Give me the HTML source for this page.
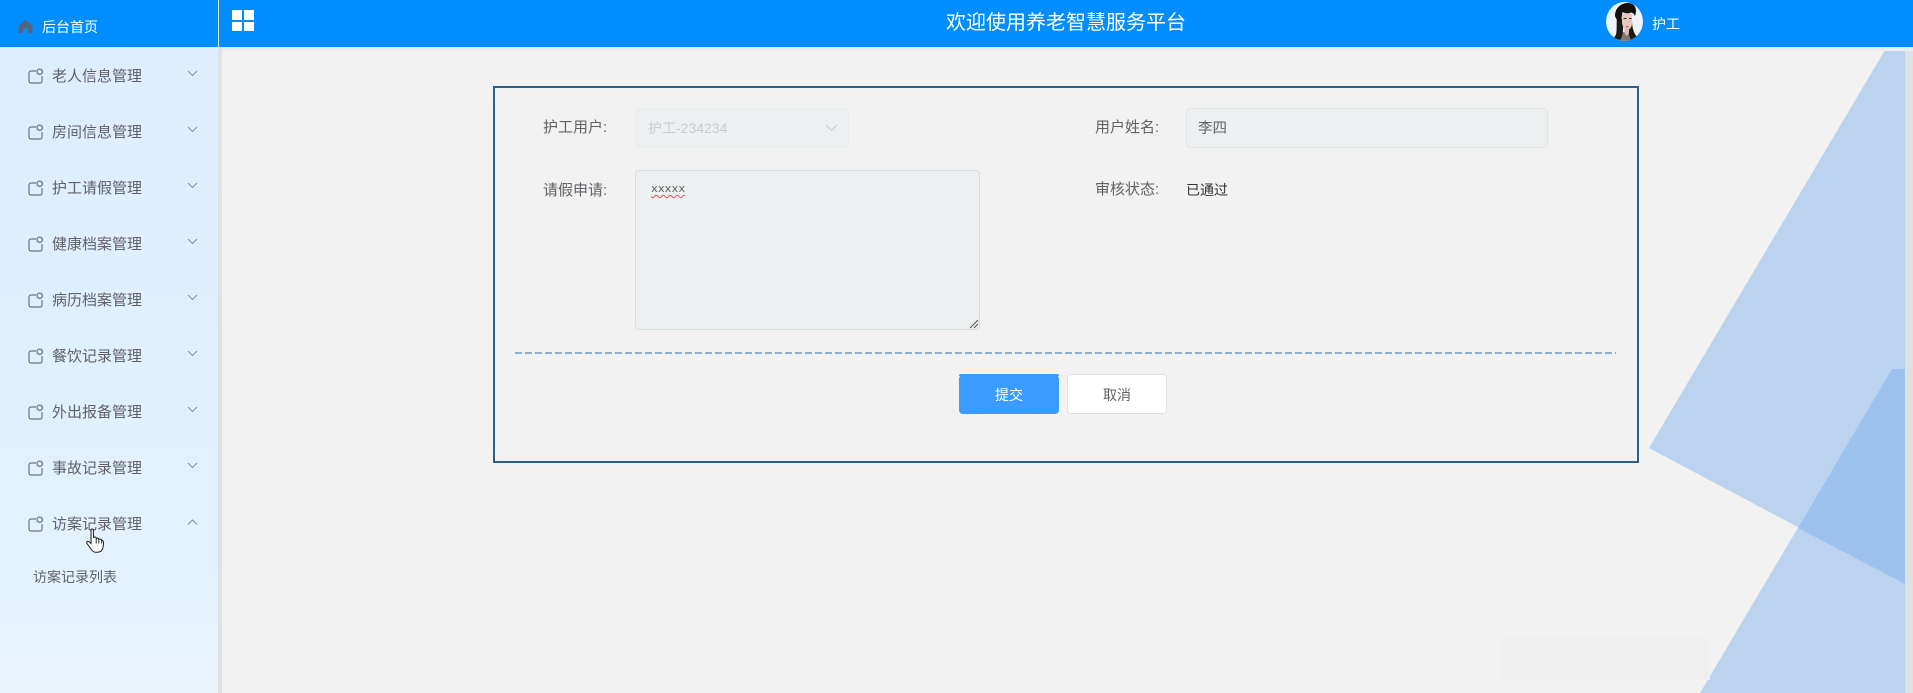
<!DOCTYPE html>
<html lang="zh">
<head>
<meta charset="utf-8">
<title>欢迎使用养老智慧服务平台</title>
<style>
html,body{margin:0;padding:0;width:1913px;height:693px;overflow:hidden;background:#f2f2f2;}
body{position:relative;font-family:"Liberation Sans","Noto Sans CJK SC",sans-serif;font-size:14px;color:#606266;}
.a{position:absolute;white-space:nowrap;}
#side{position:absolute;left:0;top:47px;width:218px;height:646px;background:linear-gradient(180deg,#deeeff 0%,#e1f0ff 60%,#e5f3ff 85%,#ebf4fd 100%);}
#sideShadow{position:absolute;left:218px;top:47px;width:4px;height:646px;background:#dfe1e4;}
#head{position:absolute;left:0;top:0;width:1913px;height:47px;background:#008dff;}
#headShadow{position:absolute;left:222px;top:47px;width:1691px;height:4px;background:linear-gradient(180deg,#e4e6ea,#f2f2f2);}
.m{font-size:15px;line-height:20px;left:52px;color:#606266;}
.ic{position:absolute;left:28px;}
.ch{position:absolute;left:187px;}
#box{position:absolute;left:493px;top:86px;width:1142px;height:373px;border:2px solid #2b5f85;background:#f2f2f2;}
.lb{font-size:15px;line-height:20px;color:#606266;}
.ctl{position:absolute;box-sizing:border-box;background:#edf0f0;border:1px solid #e1e5ea;border-radius:4px;}
.btn{position:absolute;box-sizing:border-box;height:40px;width:100px;top:374px;border-radius:4px;text-align:center;line-height:40px;font-size:14px;}
</style>
</head>
<body>
<svg class="a" style="left:222px;top:47px" width="1691" height="646" viewBox="222 47 1691 646">
  <rect x="1905" y="47" width="8" height="646" fill="#dfe0e4"/>
  <polygon points="1885,50 1905,50 1905,584 1649,448" fill="#bbd3ef"/>
  <polygon points="1892,369 1905,369 1905,693 1700,693" fill="#bbd3ef"/>
  <polygon points="1892,369 1905,369 1905,584 1798,528" fill="#9ec2ee"/>
  <rect x="1500" y="638" width="210" height="42" fill="#f0f0f0"/>
</svg>

<div id="side"></div>
<div id="sideShadow"></div>
<div id="headShadow"></div>
<div id="head"></div>
<div class="a" style="left:218px;top:0;width:1px;height:47px;background:#dcecff"></div>

<svg class="a" style="left:18px;top:19px" width="15" height="14" viewBox="0 0 15 14"><path d="M7.5 0.5 L14.5 7 V14 H10 V9 H5 V14 H0.5 V7 Z" fill="#53657b"/></svg>
<div class="a" style="left:42px;top:17px;line-height:20px;font-size:14px;color:#fff">后台首页</div>

<div class="a" style="left:232px;top:10px;width:10px;height:9.5px;background:#fff"></div>
<div class="a" style="left:244px;top:10px;width:10px;height:9.5px;background:#fff"></div>
<div class="a" style="left:232px;top:21.5px;width:10px;height:9.5px;background:#fff"></div>
<div class="a" style="left:244px;top:21.5px;width:10px;height:9.5px;background:#fff"></div>

<div class="a" style="left:946px;top:9px;width:240px;text-align:center;font-size:20px;line-height:28px;color:#fff">欢迎使用养老智慧服务平台</div>

<svg class="a" style="left:1606px;top:2px" width="38" height="39" viewBox="0 0 38 39">
  <defs><clipPath id="av"><ellipse cx="18.5" cy="19.5" rx="18.5" ry="19.5"/></clipPath></defs>
  <g clip-path="url(#av)">
    <rect width="38" height="39" fill="#eef2f9"/>
    <path d="M7 39 C8 32 14 30 19 30 C25 30 31 32 33 39 Z" fill="#7f7872"/>
    <path d="M11 13 C10 25 12 32 8 36 L14 38 C18 33 17 24 17 18 Z" fill="#1e1a18"/>
    <path d="M26 18 C26 24 27 30 31 35 L25 38 C22 33 23 26 23 22 Z" fill="#1e1a18"/>
    <path d="M16 12 H26 V21 C26 26 23 28 21 28 C18 27 16 24 16 20 Z" fill="#e8c8ba"/>
    <path d="M18.5 25 H23 V31 L20.5 34 L18.5 31 Z" fill="#dcbcae"/>
    <path d="M9 14 C9 5 16 1 22 1 C28 1 32 6 29 14 C27.5 11 26 10 24 11 C21 12 18 11 16.5 10 C16 13 15.5 16 15 20 C12 19 10 17 9 14 Z" fill="#14100d"/>
    <path d="M19.5 24 h3.5 l-1.5 1.2 Z" fill="#b8433f"/>
    <path d="M17.5 16.5 h3 M23 16.5 h2.5" stroke="#2a2a2a" stroke-width="1"/>
  </g>
</svg>
<div class="a" style="left:1652px;top:14px;line-height:20px;font-size:14px;color:#fff">护工</div>

<!-- menu items -->
<svg width="0" height="0" style="position:absolute"><defs>
  <g id="mi"><path d="M8 3 H3 A2 2 0 0 0 1 5 V13 A2 2 0 0 0 3 15 H12 A2 2 0 0 0 14 13 V8" fill="none" stroke="#6e7379" stroke-width="1.2"/><circle cx="11.7" cy="3.7" r="2.7" fill="none" stroke="#6e7379" stroke-width="1.2"/></g>
  <path id="cd" d="M1 1 L5.5 5.5 L10 1" fill="none" stroke="#8a8f96" stroke-width="1"/>
  <path id="cu" d="M1 5.5 L5.5 1 L10 5.5" fill="none" stroke="#8a8f96" stroke-width="1"/>
</defs></svg>

<svg class="ic" style="top:68px" width="16" height="16"><use href="#mi"/></svg>
<div class="a m" style="top:67px">老人信息管理</div>
<svg class="ch" style="top:70px" width="11" height="7"><use href="#cd"/></svg>

<svg class="ic" style="top:124px" width="16" height="16"><use href="#mi"/></svg>
<div class="a m" style="top:123px">房间信息管理</div>
<svg class="ch" style="top:126px" width="11" height="7"><use href="#cd"/></svg>

<svg class="ic" style="top:180px" width="16" height="16"><use href="#mi"/></svg>
<div class="a m" style="top:179px">护工请假管理</div>
<svg class="ch" style="top:182px" width="11" height="7"><use href="#cd"/></svg>

<svg class="ic" style="top:236px" width="16" height="16"><use href="#mi"/></svg>
<div class="a m" style="top:235px">健康档案管理</div>
<svg class="ch" style="top:238px" width="11" height="7"><use href="#cd"/></svg>

<svg class="ic" style="top:292px" width="16" height="16"><use href="#mi"/></svg>
<div class="a m" style="top:291px">病历档案管理</div>
<svg class="ch" style="top:294px" width="11" height="7"><use href="#cd"/></svg>

<svg class="ic" style="top:348px" width="16" height="16"><use href="#mi"/></svg>
<div class="a m" style="top:347px">餐饮记录管理</div>
<svg class="ch" style="top:350px" width="11" height="7"><use href="#cd"/></svg>

<svg class="ic" style="top:404px" width="16" height="16"><use href="#mi"/></svg>
<div class="a m" style="top:403px">外出报备管理</div>
<svg class="ch" style="top:406px" width="11" height="7"><use href="#cd"/></svg>

<svg class="ic" style="top:460px" width="16" height="16"><use href="#mi"/></svg>
<div class="a m" style="top:459px">事故记录管理</div>
<svg class="ch" style="top:462px" width="11" height="7"><use href="#cd"/></svg>

<svg class="ic" style="top:516px" width="16" height="16"><use href="#mi"/></svg>
<div class="a m" style="top:515px">访案记录管理</div>
<svg class="ch" style="top:519px" width="11" height="7"><use href="#cu"/></svg>

<div class="a" style="left:33px;top:567px;font-size:14px;line-height:20px;color:#606266">访案记录列表</div>

<!-- cursor -->
<svg class="a" style="left:86px;top:528px" width="19" height="25" viewBox="0 0 19 25">
  <path d="M5 2 C5 0.6 7.4 0.6 7.4 2 V10 C7.6 8.6 10 8.6 10.2 10 V11 C10.4 9.8 12.6 9.8 12.8 11 V12 C13.2 10.8 15.4 10.8 15.6 12.2 C16.4 12.2 17.5 13 17.5 14.4 C17.5 18 17.3 20 16 22 C15 23.8 13 24.3 10.5 24.3 C8 24.3 6.6 23.4 5.4 21.6 L1 15.5 C0 14 1.8 12.4 3.2 13.8 L5 15.6 Z" fill="#fff" stroke="#1b1b1b" stroke-width="1"/>
  <path d="M10.2 11 V15.5 M12.8 12 V15.5 M15.6 12.5 V15.5" stroke="#1b1b1b" stroke-width="0.9" fill="none"/>
</svg>

<!-- form -->
<div id="box"></div>
<div class="a lb" style="left:543px;top:118px">护工用户:</div>
<div class="ctl" style="left:635px;top:108px;width:214px;height:40px;border-color:#e8ebef;background:#edf0f0"></div>
<div class="a" style="left:648px;top:118px;font-size:14px;line-height:20px;color:#c8ccd2">护工-234234</div>
<svg class="a" style="left:825px;top:124px" width="13" height="8"><path d="M1 1 L6.5 6.5 L12 1" fill="none" stroke="#c8ccd2" stroke-width="1.1"/></svg>

<div class="a lb" style="left:1095px;top:118px">用户姓名:</div>
<div class="ctl" style="left:1186px;top:108px;width:362px;height:40px"></div>
<div class="a" style="left:1198px;top:119px;font-size:14.5px;line-height:20px;color:#606266">李四</div>

<div class="a lb" style="left:543px;top:181px">请假申请:</div>
<div class="ctl" style="left:635px;top:170px;width:345px;height:160px;border-color:#d7dde4"></div>
<div class="a" style="left:651px;top:182px;font-family:'Liberation Mono',monospace;font-size:11.4px;line-height:17px;color:#555;text-decoration:underline wavy #d9534f 1px;text-underline-offset:2px">xxxxx</div>
<svg class="a" style="left:969px;top:319px" width="10" height="10"><path d="M1 9 L9 1 M5 9 L9 5" stroke="#555" stroke-width="1"/></svg>

<div class="a lb" style="left:1095px;top:180px">审核状态:</div>
<div class="a" style="left:1186px;top:180px;font-size:14px;line-height:20px;color:#333">已通过</div>

<div class="a" style="left:515px;top:352px;width:1101px;height:2px;background:repeating-linear-gradient(90deg,#8bb0d6 0,#8bb0d6 7px,transparent 7px,transparent 10px)"></div>

<div class="btn" style="left:959px;top:375px;height:39px;border-radius:4px;background:#3c9bff;color:#fff">提交</div>
<div class="a" style="left:959px;top:374px;width:100px;height:2px;background:#3c9bff;border-radius:4px 4px 0 0"></div>
<div class="btn" style="left:1067px;background:#fff;border:1px solid #dcdfe6;color:#606266">取消</div>
</body>
</html>
